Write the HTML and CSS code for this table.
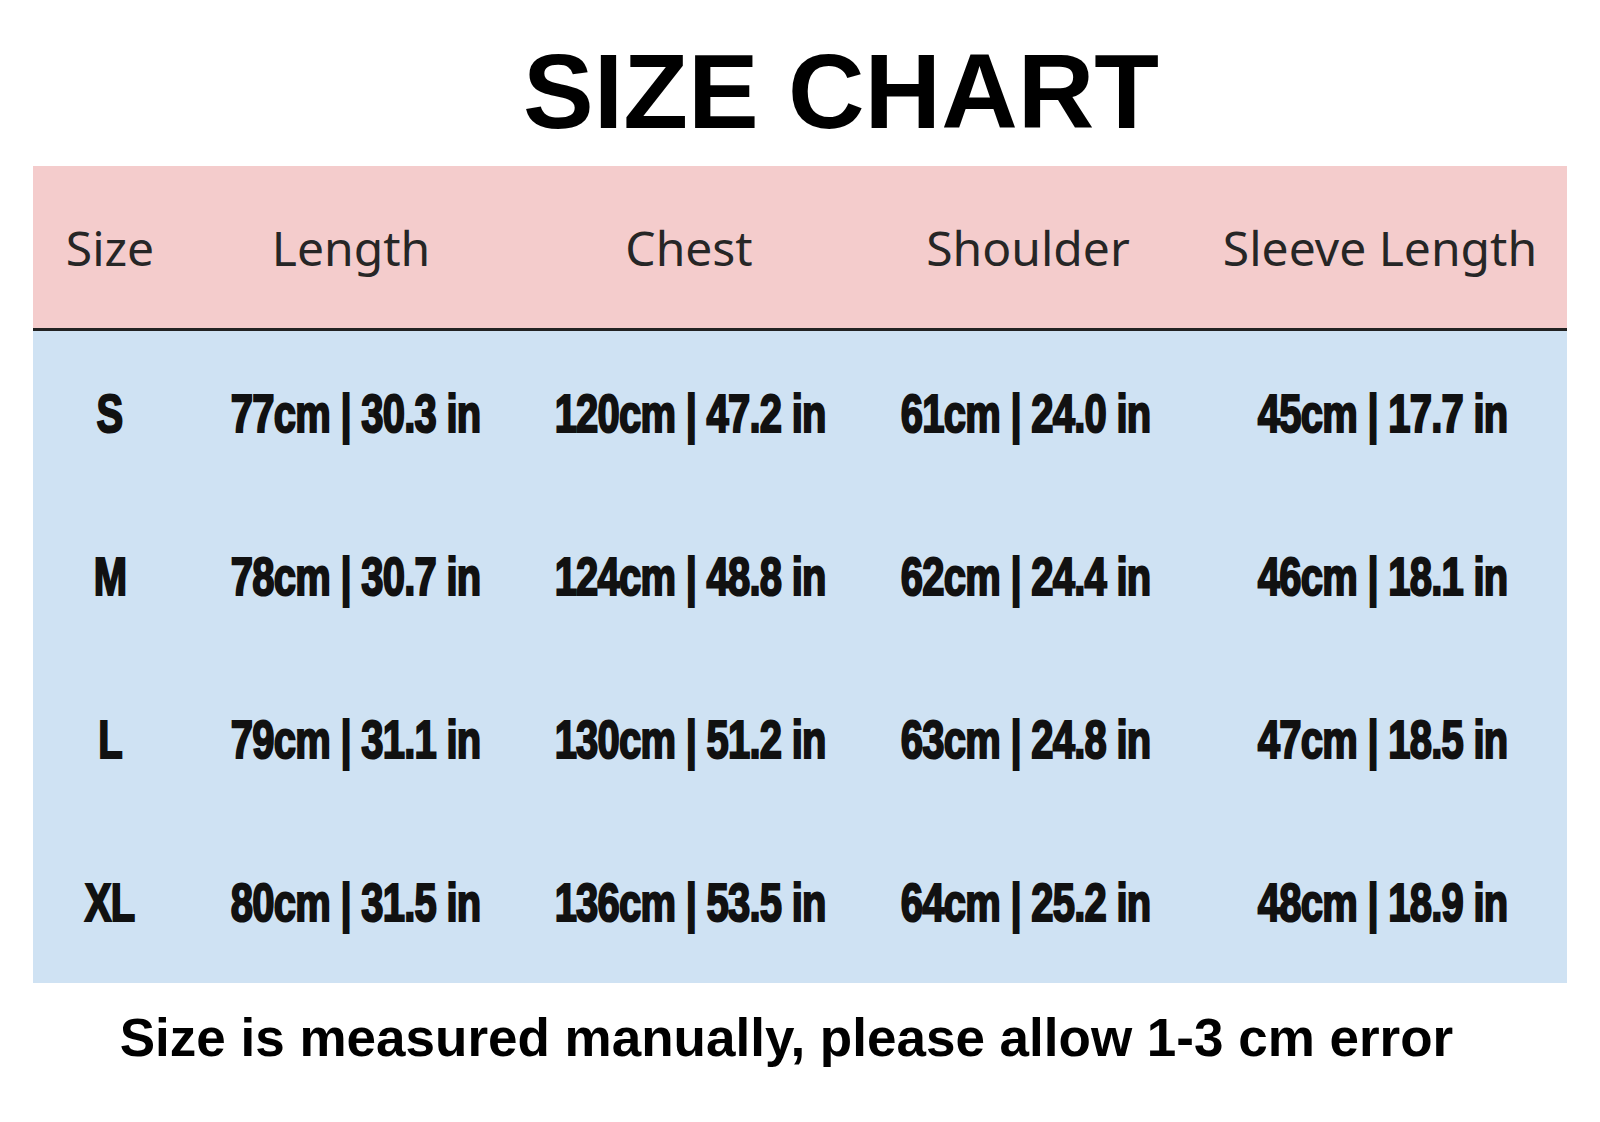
FILE: index.html
```html
<!DOCTYPE html>
<html>
<head>
<meta charset="utf-8">
<link rel="stylesheet" href="styles.css">
</head>
<body>
<div class="page">
  <h1 class="title">SIZE CHART</h1>
  <div class="chart">
    <div class="head">
      <div class="cell">Size</div>
      <div class="cell">Length</div>
      <div class="cell">Chest</div>
      <div class="cell">Shoulder</div>
      <div class="cell">Sleeve Length</div>
    </div>
    <div class="body">
      <div class="row">
        <div class="cell"><span class="val">S</span></div>
        <div class="cell"><span class="val">77cm | 30.3 in</span></div>
        <div class="cell"><span class="val">120cm | 47.2 in</span></div>
        <div class="cell"><span class="val">61cm | 24.0 in</span></div>
        <div class="cell"><span class="val">45cm | 17.7 in</span></div>
      </div>
      <div class="row">
        <div class="cell"><span class="val">M</span></div>
        <div class="cell"><span class="val">78cm | 30.7 in</span></div>
        <div class="cell"><span class="val">124cm | 48.8 in</span></div>
        <div class="cell"><span class="val">62cm | 24.4 in</span></div>
        <div class="cell"><span class="val">46cm | 18.1 in</span></div>
      </div>
      <div class="row">
        <div class="cell"><span class="val">L</span></div>
        <div class="cell"><span class="val">79cm | 31.1 in</span></div>
        <div class="cell"><span class="val">130cm | 51.2 in</span></div>
        <div class="cell"><span class="val">63cm | 24.8 in</span></div>
        <div class="cell"><span class="val">47cm | 18.5 in</span></div>
      </div>
      <div class="row">
        <div class="cell"><span class="val">XL</span></div>
        <div class="cell"><span class="val">80cm | 31.5 in</span></div>
        <div class="cell"><span class="val">136cm | 53.5 in</span></div>
        <div class="cell"><span class="val">64cm | 25.2 in</span></div>
        <div class="cell"><span class="val">48cm | 18.9 in</span></div>
      </div>
    </div>
  </div>
  <p class="note">Size is measured manually, please allow 1-3 cm error</p>
</div>
</body>
</html>
```

FILE: styles.css
```css
html, body {
  margin: 0;
  padding: 0;
  background: #ffffff;
}

.page {
  width: 1600px;
  height: 1122px;
  overflow: hidden;
  display: flex;
  flex-direction: column;
}

.title {
  margin: 38px 0 0 0;
  padding-left: 82px;
  text-align: center;
  font-family: "Liberation Sans", Arial, sans-serif;
  font-weight: 700;
  font-size: 106px;
  line-height: 106px;
  height: 106px;
  color: #000;
}

.chart {
  margin: 22px 0 0 33px;
  width: 1534px;
}

.head,
.row {
  display: grid;
  align-items: center;
}

.head {
  grid-template-columns: 154px 328px 348px 330px 374px;
  height: 162px;
  background: #f4cccc;
  border-bottom: 3px solid #222222;
  font-family: "Noto Sans", "Open Sans", sans-serif;
  font-size: 48px;
  color: #262626;
}

.body {
  background: #cfe2f3;
}

.row {
  grid-template-columns: 154px 320px 346px 346px 368px;
  height: 163px;
  font-family: "Liberation Sans", Arial, sans-serif;
  font-weight: 700;
  font-size: 54px;
  letter-spacing: -1px;
  color: #111111;
}

.val {
  display: inline-block;
  transform: scaleX(0.74);
  -webkit-text-stroke: 2.2px #111111;
}

.cell {
  text-align: center;
  white-space: nowrap;
}

.note {
  margin: 28px 0 0 0;
  padding-right: 27px;
  text-align: center;
  font-family: "Liberation Sans", Arial, sans-serif;
  font-weight: 700;
  font-size: 53px;
  line-height: 53px;
  color: #000;
}
```
